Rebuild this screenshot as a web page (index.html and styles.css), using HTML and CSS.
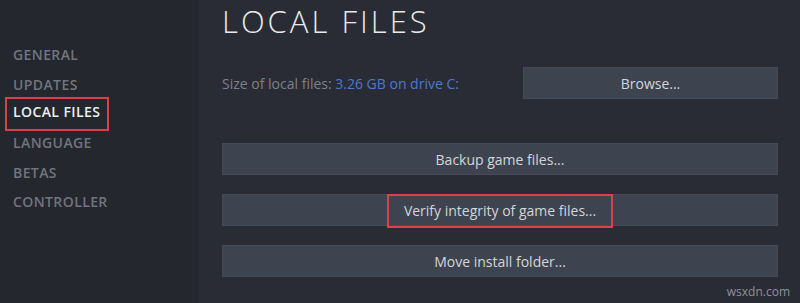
FILE: index.html
```html
<!DOCTYPE html>
<html>
<head>
<meta charset="utf-8">
<link rel="stylesheet" href="styles.css">
</head>
<body>
<div class="window">
  <nav class="sidebar">
    <a class="tab">GENERAL</a>
    <a class="tab">UPDATES</a>
    <a class="tab active"><span class="hl">LOCAL FILES</span></a>
    <a class="tab">LANGUAGE</a>
    <a class="tab">BETAS</a>
    <a class="tab">CONTROLLER</a>
  </nav>
  <main class="panel">
    <h1 class="title">LOCAL FILES</h1>
    <div class="size-row">
      <span class="size-label">Size of local files: <a class="size-link">3.26 GB on drive C:</a></span>
      <button class="btn browse">Browse...</button>
    </div>
    <div class="actions">
      <button class="btn wide">Backup game files...</button>
      <button class="btn wide"><span class="hl-btn">Verify integrity of game files...</span></button>
      <button class="btn wide">Move install folder...</button>
    </div>
    <div class="watermark">wsxdn.com</div>
  </main>
</div>
</body>
</html>
```
FILE: styles.css
```css
* { box-sizing: border-box; }
html, body {
  margin: 0;
  padding: 0;
  width: 800px;
  height: 303px;
  overflow: hidden;
  background: #282b33;
  font-family: "Open Sans", "Liberation Sans", sans-serif;
}
.window {
  display: flex;
  width: 800px;
  height: 303px;
}
.sidebar {
  width: 199px;
  flex: none;
  background: #24272e;
  display: flex;
  flex-direction: column;
  padding-top: 40px;
}
.tab {
  display: flex;
  align-items: center;
  height: 29.4px;
  padding-left: 13px;
  font-size: 14px;
  letter-spacing: 0.4px;
  color: #70757d;
  font-weight: 600;
}
.tab.active {
  color: #eceef0;
  padding-left: 5px;
}
.hl {
  display: inline-block;
  border: 2px solid #d8434a;
  padding: 3px 7px 7px 6px;
  margin: -1px 0 -3px;
  line-height: 20px;
}
.panel {
  flex: 1;
  background: #292c34;
  padding: 0 22px 0 23px;
  display: flex;
  flex-direction: column;
}
.title {
  margin: 0;
  padding-top: 6px;
  font-size: 31px;
  line-height: 31px;
  font-weight: 300;
  letter-spacing: 3px;
  color: #e8e9eb;
}
.size-row {
  margin-top: 30px;
  display: flex;
  align-items: center;
  justify-content: space-between;
  height: 32px;
}
.size-label {
  font-size: 14px;
  color: #7d828a;
}
.size-link {
  color: #4c79cf;
}
.btn {
  font-family: inherit;
  font-size: 14px;
  color: #d3d5d9;
  background: #3e4350;
  border: 1px solid #444a57;
  border-radius: 0;
  display: flex;
  align-items: center;
  justify-content: center;
  padding: 0;
  height: 32px;
}
.browse {
  width: 255px;
}
.actions {
  margin-top: 44px;
  display: flex;
  flex-direction: column;
  gap: 19px;
}
.wide {
  width: 100%;
}
.hl-btn {
  display: inline-block;
  border: 2px solid #d8434a;
  padding: 5px 15px 6px;
  line-height: 19px;
  margin-top: 2px;
}
.watermark {
  margin-top: 6px;
  align-self: flex-end;
  margin-right: -12px;
  font-size: 12px;
  color: #8e9299;
}
```
